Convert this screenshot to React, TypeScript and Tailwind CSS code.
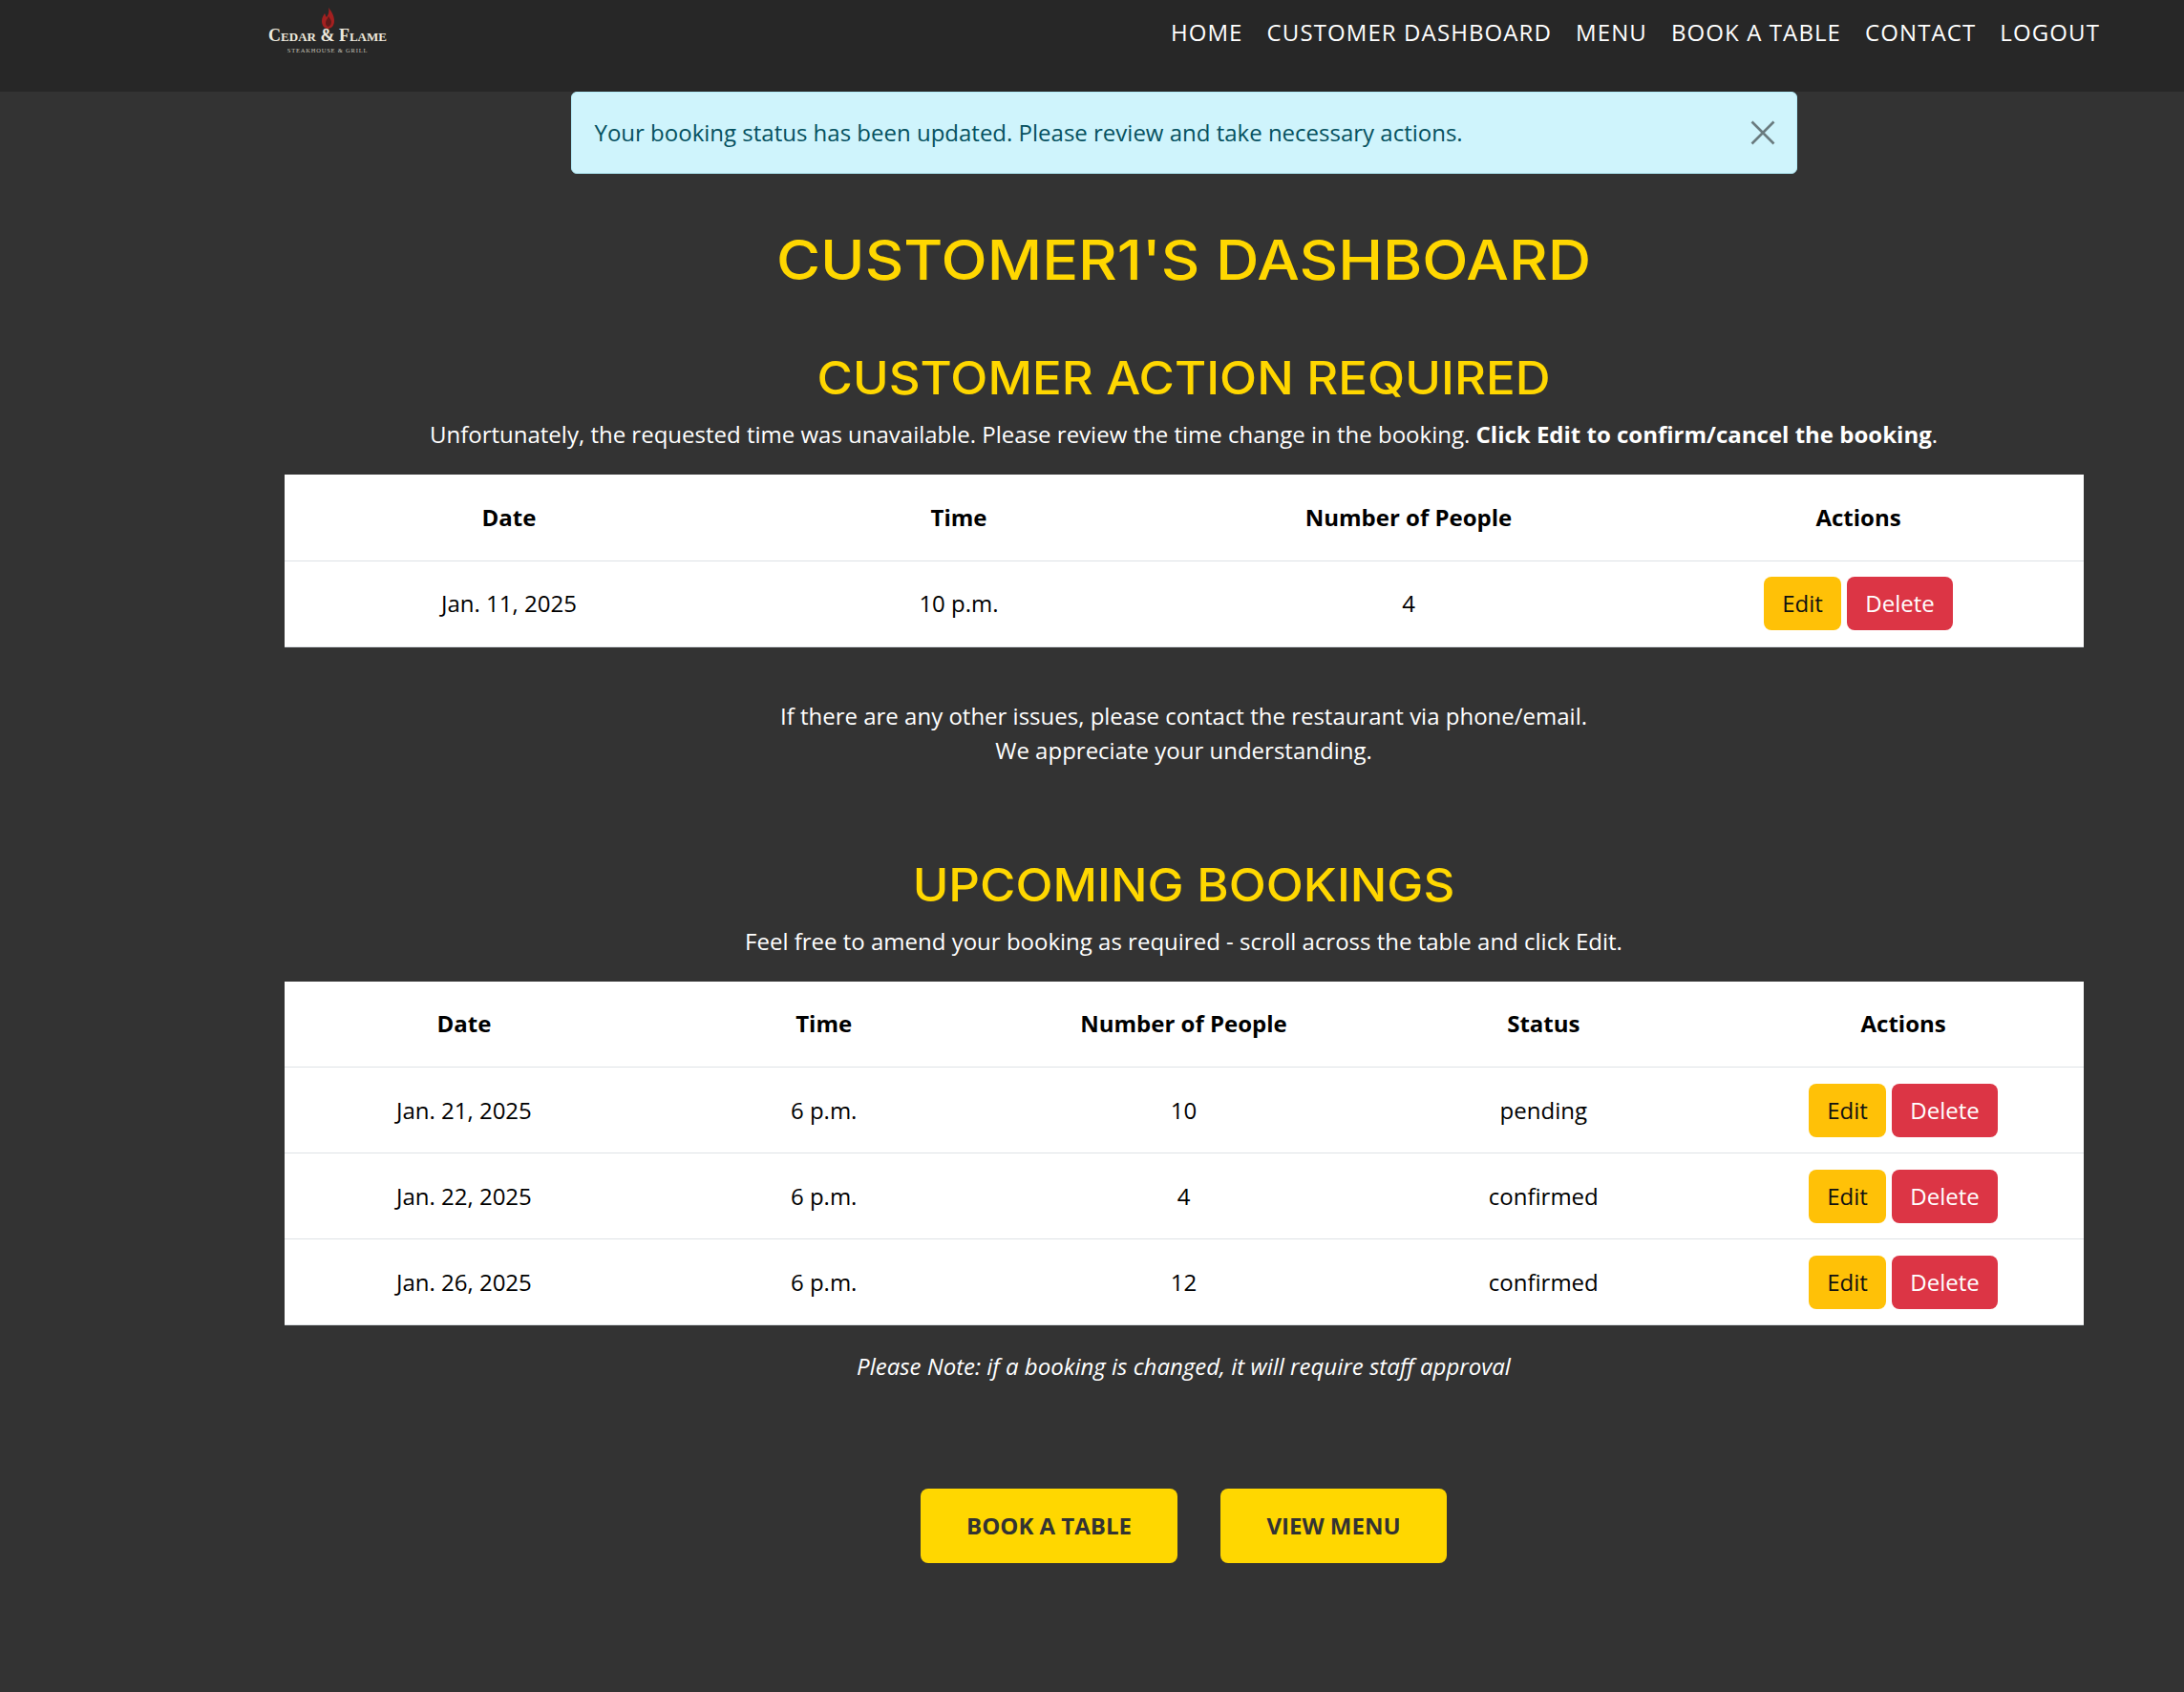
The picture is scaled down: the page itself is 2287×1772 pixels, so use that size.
const heading = "font-['Inter',sans-serif] text-[#ffd700] font-medium uppercase text-center";

function ActionButtons() {
  return (
    <div className="flex justify-center gap-[6px]">
      <button className="h-[56px] w-[81px] rounded-[8px] bg-[#ffc107] text-[#111] text-[24px]">Edit</button>
      <button className="h-[56px] w-[111px] rounded-[8px] bg-[#dc3545] text-white text-[24px]">Delete</button>
    </div>
  );
}

function BookingTable({ headers, rows }: { headers: string[]; rows: string[][] }) {
  return (
    <table className="w-[1884px] mx-auto bg-white text-black table-fixed">
      <thead>
        <tr className="h-[90px] border-b border-[#dee2e6]">
          {headers.map((h) => (
            <th key={h} className="font-bold text-[24px]">{h}</th>
          ))}
        </tr>
      </thead>
      <tbody>
        {rows.map((r, i) => (
          <tr key={i} className="h-[90px] border-b border-[#dee2e6]">
            {r.map((c, j) => (
              <td key={j} className="text-center text-[24px]">{c}</td>
            ))}
            <td><ActionButtons /></td>
          </tr>
        ))}
      </tbody>
    </table>
  );
}

export default function App() {
  return (
    <div className="min-h-[1772px] bg-[#333333] font-['Open_Sans',sans-serif] text-white">
      <nav className="h-[96px] bg-[#272727] flex items-start justify-between pl-[281px] pr-[88px]">
        <div className="flex flex-col items-center pt-[8px] w-[124px]">
          <svg width="13" height="22" viewBox="0 0 13 22">
            <path d="M7 0C10 4 13 8 13 14C13 19 10 22 6 22C2 22 0 18 0 14C0 10 2 8 3 6C4 8 4 9 5 10C7 7 8 4 7 0Z" fill="#a32020" />
            <path d="M7 9C6 12 4 13 4 16C4 19 6 20 7 20C9 19 10 17 10 15C10 13 8 11 7 9Z" fill="#5e1a1a" />
          </svg>
          <span className="font-['Liberation_Serif',serif] font-bold text-[#eee9dd] text-[18px] leading-[15px] whitespace-nowrap [font-variant:small-caps]">Cedar &amp; Flame</span>
          <span className="font-['Liberation_Serif',serif] text-[#c4c0b6] text-[6.5px] leading-[10px] mt-[3px] tracking-[0.8px] whitespace-nowrap">STEAKHOUSE &amp; GRILL</span>
        </div>
        <div className="flex gap-[25px] pt-[17px] text-[24px] leading-[33px] tracking-[1.1px]">
          <span>HOME</span>
          <span>CUSTOMER DASHBOARD</span>
          <span>MENU</span>
          <span>BOOK A TABLE</span>
          <span>CONTACT</span>
          <span>LOGOUT</span>
        </div>
      </nav>

      <div className="pl-[192px]">
        <div className="w-[1284px] h-[86px] mx-auto pl-[24px] pr-[22px] flex items-center justify-between rounded-[6px] bg-[#cff4fc] border border-[#b6effb] text-[#055160]">
          <span className="text-[24px]">Your booking status has been updated. Please review and take necessary actions.</span>
          <svg width="26" height="26" viewBox="0 0 26 26" className="text-[#6a7b7f]">
            <path d="M1.5 1.5L24.5 24.5M24.5 1.5L1.5 24.5" stroke="currentColor" strokeWidth="2.6" fill="none" />
          </svg>
        </div>

        <h1 className={`${heading} text-[58px] leading-[70px] mt-[55px] scale-x-[1.085]`}>Customer1's Dashboard</h1>
        <h2 className={`${heading} text-[48px] leading-[58px] mt-[60px] scale-x-[1.062]`}>Customer Action Required</h2>
        <p className="text-center text-[24px] leading-[36px] mt-[12px]">
          Unfortunately, the requested time was unavailable. Please review the time change in the booking.{" "}
          <b>Click Edit to confirm/cancel the booking</b>.
        </p>
        <div className="mt-[24px]">
          <BookingTable
            headers={["Date", "Time", "Number of People", "Actions"]}
            rows={[["Jan. 11, 2025", "10 p.m.", "4"]]}
          />
        </div>
        <p className="text-center text-[24px] leading-[36px] mt-[54px]">
          If there are any other issues, please contact the restaurant via phone/email.
          <br />
          We appreciate your understanding.
        </p>

        <h2 className={`${heading} text-[48px] leading-[58px] mt-[94px] scale-x-[1.062]`}>Upcoming Bookings</h2>
        <p className="text-center text-[24px] leading-[36px] mt-[12px]">
          Feel free to amend your booking as required - scroll across the table and click Edit.
        </p>
        <div className="mt-[24px]">
          <BookingTable
            headers={["Date", "Time", "Number of People", "Status", "Actions"]}
            rows={[
              ["Jan. 21, 2025", "6 p.m.", "10", "pending"],
              ["Jan. 22, 2025", "6 p.m.", "4", "confirmed"],
              ["Jan. 26, 2025", "6 p.m.", "12", "confirmed"],
            ]}
          />
        </div>
        <p className="text-center italic text-[24px] leading-[36px] mt-[25px]">
          Please Note: if a booking is changed, it will require staff approval
        </p>

        <div className="flex justify-center gap-[45px] mt-[110px]">
          <button className="w-[269px] h-[78px] rounded-[8px] bg-[#ffd700] text-[#333] font-bold text-[24px]">BOOK A TABLE</button>
          <button className="w-[237px] h-[78px] rounded-[8px] bg-[#ffd700] text-[#333] font-bold text-[24px]">VIEW MENU</button>
        </div>
      </div>
    </div>
  );
}
